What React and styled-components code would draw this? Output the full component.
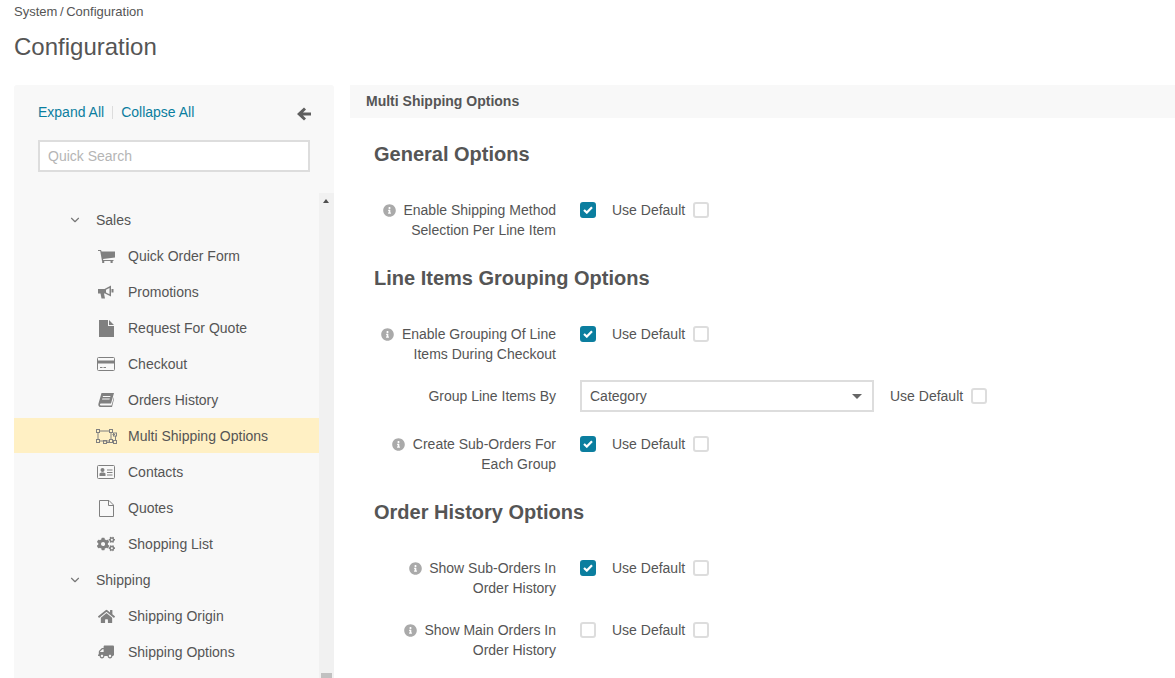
import styled, { createGlobalStyle } from "styled-components";
import { FaCogs, FaHome, FaInfoCircle, FaTruck } from "react-icons/fa";
import { FiChevronDown } from "react-icons/fi";

const GlobalStyle = createGlobalStyle`
  html, body {
    margin: 0;
    height: 100%;
    overflow: hidden;
    background: #fff;
    font-family: "Liberation Sans", Arial, sans-serif;
    font-size: 14px;
    color: #555;
  }
`;

const Page = styled.div`
  height: 100vh;
  display: flex;
  flex-direction: column;
  padding: 0 0 0 14px;
  box-sizing: border-box;
  overflow: hidden;
`;

const Breadcrumbs = styled.div`
  font-size: 13px;
  line-height: 16px;
  padding-top: 4px;
  color: #555;
  word-spacing: -1px;
`;

const Title = styled.h1`
  margin: 12px 0 0;
  font-size: 24px;
  line-height: 30px;
  font-weight: 400;
  color: #555;
`;

const Columns = styled.div`
  flex: 1;
  min-height: 0;
  margin-top: 23px;
  display: flex;
  gap: 16px;
`;

const Sidebar = styled.aside`
  width: 320px;
  flex: none;
  display: flex;
  flex-direction: column;
  background: #f8f8f8;
  border-radius: 3px 3px 0 0;
`;

const SidebarHead = styled.div`
  padding: 17px 24px 21px;
`;

const LinksRow = styled.div`
  display: flex;
  align-items: center;
  height: 20px;
  margin-bottom: 18px;
`;

const LinkText = styled.a`
  color: #0b7e9f;
  font-size: 14px;
  line-height: 20px;
`;

const Divider = styled.span`
  width: 1px;
  height: 13px;
  margin: 0 8px;
  background: #ddd;
`;

const BackArrow = styled.svg`
  margin-left: auto;
  margin-right: -1px;
  margin-top: 4px;
  fill: #5f5f5f;
`;

const SearchBox = styled.div`
  height: 32px;
  box-sizing: border-box;
  border: 2px solid #ddd;
  background: #fff;
  padding: 0 8px;
  line-height: 28px;
  color: #b5b5b5;
`;

const TreeWrap = styled.div`
  flex: 1;
  min-height: 0;
  display: flex;
`;

const Tree = styled.div`
  flex: 1;
  min-width: 0;
  padding-top: 9px;
  overflow: hidden;
`;

const GroupRow = styled.div`
  height: 36px;
  display: flex;
  align-items: center;
  padding-left: 54px;
  color: #555;
`;

const Chevron = styled(FiChevronDown)`
  width: 14px;
  height: 14px;
  margin-right: 14px;
  color: #777;
`;

const ItemRow = styled.div`
  box-sizing: border-box;
  height: ${({ $active }) => ($active ? "35px" : "36px")};
  margin-bottom: ${({ $active }) => ($active ? "1px" : "0")};
  padding-top: ${({ $active }) => ($active ? "1px" : "0")};
  display: flex;
  align-items: center;
  color: #555;
  background: ${({ $active }) => ($active ? "#fff0c4" : "transparent")};
`;

const IconSlot = styled.span`
  width: 22px;
  margin-left: 81px;
  margin-right: 11px;
  display: flex;
  justify-content: center;
  color: #808080;
  font-size: ${({ $size }) => $size || 16}px;
`;

const FlippedTruck = styled(FaTruck)`
  transform: scaleX(-1);
`;

const Glyph = styled.svg`
  display: block;
  fill: currentColor;
`;

const Stroked = styled.g`
  fill: none;
  stroke: currentColor;
`;

const CartIcon = () => (
  <Glyph width="17" height="13" viewBox="0 0 17 13">
    <path d="M0 0h3l.6 1.5H17v6L5 9l.3 1h10.2v1H4L2.2 1H0z" />
    <circle cx="5.2" cy="12" r="1.2" />
    <circle cx="13.6" cy="12" r="1.2" />
  </Glyph>
);

const HornIcon = () => (
  <Glyph width="16" height="14" viewBox="0 0 16 14">
    <path
      fillRule="evenodd"
      d="M0 4h6.5L13 .5v11L7 8.500H6l1 5H3.500L2.500 8.500H0zM8 4.800v2.700l3.500 1.800V3z"
    />
    <rect x="13.500" y="4" width="2" height="3.500" />
  </Glyph>
);

const FileIcon = () => (
  <Glyph width="15" height="17" viewBox="0 0 15 17">
    <path d="M0 0h9v6h6v11H0zM10 0l5 5h-5z" />
  </Glyph>
);

const CardIcon = () => (
  <Glyph width="18" height="14" viewBox="0 0 18 14">
    <Stroked>
      <rect x=".5" y=".5" width="17" height="13" rx="1" />
    </Stroked>
    <rect x="1" y="3.500" width="16" height="3" />
    <rect x="3" y="10" width="2.500" height="1" />
    <rect x="6.500" y="10" width="2.500" height="1" />
  </Glyph>
);

const BookIcon = () => (
  <Glyph width="16" height="14" viewBox="0 0 16 14">
    <path
      fillRule="evenodd"
      d="M3.500 0H16l-3 10.500H3C1.600 10.500 1.600 12.500 3 12.500h10.500L16 4v2l-2 8H2.500C.5 14 0 12 .5 10.500zM5 3l-.3 1h7.500l.3-1zM4.300 5.500 4 6.500h7.500l.3-1z"
    />
  </Glyph>
);

const GroupIcon = () => (
  <Glyph width="21" height="15" viewBox="0 0 21 15">
    <Stroked>
      <path d="M2 3.500V10.500M3.500 2H13.500M15 3.500V10.500M3.500 12H13.500" />
      <path d="M16.500 5.500H19M19.500 7v5M18 13.500H11M9.500 13v0" />
      <rect x=".5" y=".5" width="3" height="3" />
      <rect x="13.500" y=".5" width="3" height="3" />
      <rect x=".5" y="10.500" width="3" height="3" />
      <rect x="13.500" y="10.500" width="3" height="3" />
      <rect x="17.500" y="4" width="3" height="3" />
      <rect x="17.500" y="11.500" width="3" height="3" />
      <rect x="7.500" y="11.500" width="3" height="3" />
    </Stroked>
  </Glyph>
);

const ContactIcon = () => (
  <Glyph width="18" height="14" viewBox="0 0 18 14">
    <Stroked>
      <rect x=".5" y=".5" width="17" height="13" rx="1" />
      <path d="M10 5h5.500M10 7.500h5.500M10 10h5.500" />
    </Stroked>
    <circle cx="5.500" cy="5" r="2" />
    <path d="M2.500 11V9c0-1 1-1.500 3-1.500s3 .5 3 1.500v2z" />
  </Glyph>
);

const PageIcon = () => (
  <Glyph width="15" height="17" viewBox="0 0 15 17">
    <Stroked>
      <path d="M.5.500h9.500l4.500 4.500v11.500H.5zM9.500.5v5h5" />
    </Stroked>
  </Glyph>
);

const CheckMark = styled.svg`
  fill: none;
  stroke: #fff;
  stroke-width: 2.2;
`;

const Scrollbar = styled.div`
  width: 15px;
  flex: none;
  background: #f1f1f1;
  position: relative;
`;

const ScrollUp = styled.span`
  position: absolute;
  left: 4px;
  top: 6px;
  width: 0;
  height: 0;
  border-left: 3.5px solid transparent;
  border-right: 3.5px solid transparent;
  border-bottom: 4px solid #505050;
`;

const ScrollThumb = styled.span`
  position: absolute;
  left: 2px;
  right: 2px;
  bottom: 0;
  height: 5px;
  background: #c1c1c1;
`;

const Main = styled.main`
  flex: 1;
  min-width: 0;
`;

const PanelHeader = styled.div`
  height: 33px;
  background: #f8f8f8;
  padding-left: 16px;
  line-height: 33px;
  font-size: 14px;
  font-weight: 700;
  color: #555;
`;

const Content = styled.div`
  padding: 23px 0 0 24px;
`;

const SectionTitle = styled.h2`
  margin: 0;
  height: 26px;
  font-size: 20px;
  line-height: 26px;
  font-weight: 700;
  color: #555;
`;

const SectionBody = styled.div`
  padding-top: 33px;
  margin-bottom: 25px;
`;

const FormRow = styled.div`
  display: grid;
  grid-template-columns: 182px 1fr;
  column-gap: 24px;
  margin-bottom: 22px;
  margin-top: ${({ $select }) => ($select ? "-6px" : "0")};
  align-items: ${({ $select }) => ($select ? "center" : "start")};
  &:last-child {
    margin-bottom: 0;
  }
`;

const RowLabel = styled.div`
  text-align: right;
  line-height: 20px;
  color: #555;
`;

const InfoIcon = styled(FaInfoCircle)`
  font-size: 13px;
  color: #aaa;
  vertical-align: -1.5px;
  margin-right: 7.5px;
`;

const Controls = styled.div`
  display: flex;
  align-items: center;
  height: ${({ $select }) => ($select ? "32px" : "20px")};
`;

const Box = styled.span`
  width: 16px;
  height: 16px;
  flex: none;
  box-sizing: border-box;
  border-radius: 3px;
  display: flex;
  align-items: center;
  justify-content: center;
  background: ${({ $checked }) => ($checked ? "#0b7e9f" : "#fff")};
  border: 2px solid ${({ $checked }) => ($checked ? "#0b7e9f" : "#ddd")};
`;

const UseDefaultLabel = styled.span`
  margin-left: 16px;
  margin-right: 8px;
  line-height: 20px;
`;

const Select = styled.div`
  width: 294px;
  height: 32px;
  box-sizing: border-box;
  border: 2px solid #ddd;
  background: #fff;
  padding: 0 10px 0 8px;
  display: flex;
  align-items: center;
  justify-content: space-between;
  line-height: 20px;
`;

const SelectCaret = styled.span`
  width: 0;
  height: 0;
  border-left: 5px solid transparent;
  border-right: 5px solid transparent;
  border-top: 5px solid #666;
`;

const UseDefault = () => (
  <>
    <UseDefaultLabel>Use Default</UseDefaultLabel>
    <Box />
  </>
);

const salesItems = [
  { label: "Quick Order Form", Icon: CartIcon },
  { label: "Promotions", Icon: HornIcon },
  { label: "Request For Quote", Icon: FileIcon },
  { label: "Checkout", Icon: CardIcon },
  { label: "Orders History", Icon: BookIcon },
  { label: "Multi Shipping Options", Icon: GroupIcon, active: true },
  { label: "Contacts", Icon: ContactIcon },
  { label: "Quotes", Icon: PageIcon },
  { label: "Shopping List", Icon: FaCogs, size: 18 },
];

const shippingItems = [
  { label: "Shipping Origin", Icon: FaHome, size: 17 },
  { label: "Shipping Options", Icon: FlippedTruck, size: 16 },
];

const sections = [
  {
    title: "General Options",
    rows: [{ lines: ["Enable Shipping Method", "Selection Per Line Item"], checked: true, info: true }],
  },
  {
    title: "Line Items Grouping Options",
    rows: [
      { lines: ["Enable Grouping Of Line", "Items During Checkout"], checked: true, info: true },
      { lines: ["Group Line Items By"], select: "Category" },
      { lines: ["Create Sub-Orders For", "Each Group"], checked: true, info: true },
    ],
  },
  {
    title: "Order History Options",
    rows: [
      { lines: ["Show Sub-Orders In", "Order History"], checked: true, info: true },
      { lines: ["Show Main Orders In", "Order History"], checked: false, info: true },
    ],
  },
];

function TreeItem({ label, Icon, size, active }) {
  return (
    <ItemRow $active={active}>
      <IconSlot $size={size}>
        <Icon />
      </IconSlot>
      {label}
    </ItemRow>
  );
}

function SettingRow({ lines, info, checked, select }) {
  return (
    <FormRow $select={!!select}>
      <RowLabel>
        {info && <InfoIcon />}
        {lines[0]}
        {lines[1] && <br />}
        {lines[1]}
      </RowLabel>
      <Controls $select={!!select}>
        {select ? (
          <Select>
            {select}
            <SelectCaret />
          </Select>
        ) : (
          <Box $checked={checked}>
            {checked && (
              <CheckMark width="10" height="8" viewBox="0 0 10 8">
                <path d="M1 4l2.800 2.600L9 1.200" />
              </CheckMark>
            )}
          </Box>
        )}
        <UseDefault />
      </Controls>
    </FormRow>
  );
}

export default function App() {
  return (
    <Page>
      <GlobalStyle />
      <Breadcrumbs>System / Configuration</Breadcrumbs>
      <Title>Configuration</Title>
      <Columns>
        <Sidebar>
          <SidebarHead>
            <LinksRow>
              <LinkText>Expand All</LinkText>
              <Divider />
              <LinkText>Collapse All</LinkText>
              <BackArrow width="14" height="14" viewBox="0 0 14 14">
                <path d="M7 .5l2 2L6 5.500h8v3H6l3 3-2 2L0 7z" />
              </BackArrow>
            </LinksRow>
            <SearchBox>Quick Search</SearchBox>
          </SidebarHead>
          <TreeWrap>
            <Tree>
              <GroupRow>
                <Chevron />
                Sales
              </GroupRow>
              {salesItems.map((item) => (
                <TreeItem key={item.label} {...item} />
              ))}
              <GroupRow>
                <Chevron />
                Shipping
              </GroupRow>
              {shippingItems.map((item) => (
                <TreeItem key={item.label} {...item} />
              ))}
            </Tree>
            <Scrollbar>
              <ScrollUp />
              <ScrollThumb />
            </Scrollbar>
          </TreeWrap>
        </Sidebar>
        <Main>
          <PanelHeader>Multi Shipping Options</PanelHeader>
          <Content>
            {sections.map((section) => (
              <div key={section.title}>
                <SectionTitle>{section.title}</SectionTitle>
                <SectionBody>
                  {section.rows.map((row) => (
                    <SettingRow key={row.lines[0]} {...row} />
                  ))}
                </SectionBody>
              </div>
            ))}
          </Content>
        </Main>
      </Columns>
    </Page>
  );
}
